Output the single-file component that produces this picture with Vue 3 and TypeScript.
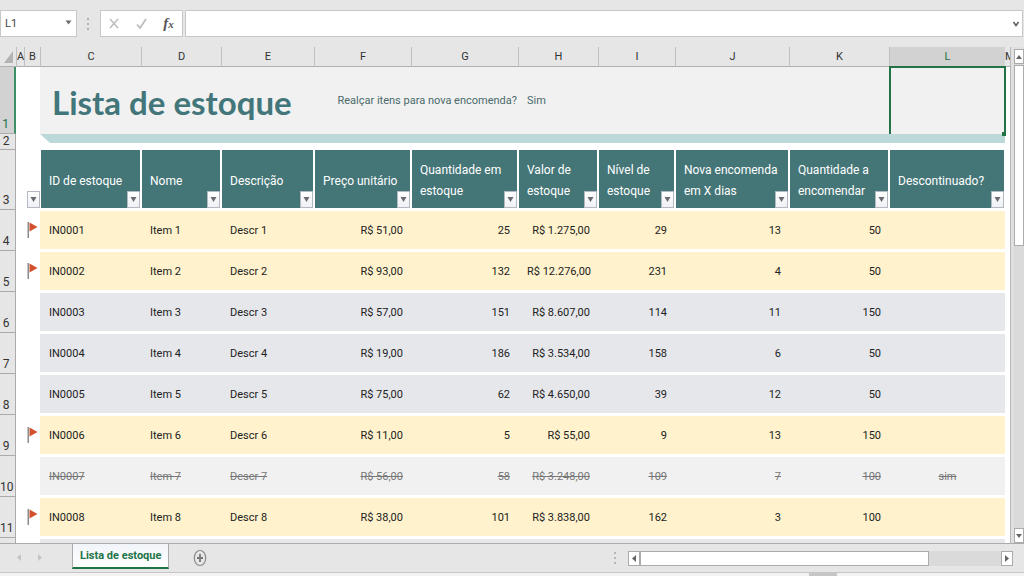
<script setup lang="ts">
import { ref } from 'vue'

interface Column {
  letter: string
  width: number
  label?: string
  align?: 'left' | 'right' | 'center'
}

interface StockRow {
  number: number
  flagged: boolean
  discontinued: boolean
  values: string[]
}

const columns: Column[] = [
  { letter: 'A', width: 8 },
  { letter: 'B', width: 16 },
  { letter: 'C', width: 101, label: 'ID de estoque', align: 'left' },
  { letter: 'D', width: 80, label: 'Nome', align: 'left' },
  { letter: 'E', width: 93, label: 'Descrição', align: 'left' },
  { letter: 'F', width: 97, label: 'Preço unitário', align: 'right' },
  { letter: 'G', width: 107, label: 'Quantidade em estoque', align: 'right' },
  { letter: 'H', width: 80, label: 'Valor de estoque', align: 'right' },
  { letter: 'I', width: 77, label: 'Nível de estoque', align: 'right' },
  { letter: 'J', width: 114, label: 'Nova encomenda em X dias', align: 'right' },
  { letter: 'K', width: 100, label: 'Quantidade a encomendar', align: 'right' },
  { letter: 'L', width: 116, label: 'Descontinuado?', align: 'center' },
  { letter: 'M', width: 5 },
]
const dataColumns = columns.filter((c) => c.label)

const item = (n: number, flagged: boolean, rest: string[], discontinued = false): StockRow => ({
  number: n + 3,
  flagged,
  discontinued,
  values: [`IN000${n}`, `Item ${n}`, `Descr ${n}`, ...rest],
})

const rows: StockRow[] = [
  item(1, true, ['R$ 51,00', '25', 'R$ 1.275,00', '29', '13', '50', '']),
  item(2, true, ['R$ 93,00', '132', 'R$ 12.276,00', '231', '4', '50', '']),
  item(3, false, ['R$ 57,00', '151', 'R$ 8.607,00', '114', '11', '150', '']),
  item(4, false, ['R$ 19,00', '186', 'R$ 3.534,00', '158', '6', '50', '']),
  item(5, false, ['R$ 75,00', '62', 'R$ 4.650,00', '39', '12', '50', '']),
  item(6, true, ['R$ 11,00', '5', 'R$ 55,00', '9', '13', '150', '']),
  item(7, false, ['R$ 56,00', '58', 'R$ 3.248,00', '109', '7', '100', 'sim'], true),
  item(8, true, ['R$ 38,00', '101', 'R$ 3.838,00', '162', '3', '100', '']),
]

const cellName = ref('L1')
const formula = ref('')
</script>

<template>
  <div class="app">
    <header class="formula-bar">
      <div class="name-box">
        <input v-model="cellName" class="name-input" aria-label="Caixa de nome" />
        <button class="plain" aria-label="Abrir lista de nomes">
          <svg width="7" height="5" viewBox="0 0 7 5"><path d="M0.5 0.5h6L3.5 4.5z" fill="#6e6e6e" /></svg>
        </button>
      </div>
      <svg class="grip" width="2" height="12" viewBox="0 0 2 12">
        <path d="M0 0h2v2H0zM0 5h2v2H0zM0 10h2v2H0z" fill="#b0b0b0" />
      </svg>
      <div class="entry-buttons">
        <button class="plain" aria-label="Cancelar">
          <svg width="10" height="11" viewBox="0 0 10 11"><path d="M1 1l8 9M9 1L1 10" stroke="#bdbdbd" stroke-width="1.5" /></svg>
        </button>
        <button class="plain" aria-label="Inserir">
          <svg width="11" height="11" viewBox="0 0 11 11"><path d="M1 6.5L4 10L10 1" fill="none" stroke="#bdbdbd" stroke-width="1.8" /></svg>
        </button>
        <button class="plain fx" aria-label="Inserir função">f<sub>x</sub></button>
      </div>
      <div class="formula">
        <input v-model="formula" class="formula-input" aria-label="Barra de fórmulas" />
        <button class="plain" aria-label="Expandir barra de fórmulas">
          <svg width="6" height="6" viewBox="0 0 6 6"><path d="M0.5 1L3 4.5L5.5 1" fill="none" stroke="#666" stroke-width="1.6" /></svg>
        </button>
      </div>
    </header>

    <main class="workspace">
      <div class="sheet">
        <table>
          <colgroup>
            <col class="col-number" />
            <col v-for="c in columns" :key="c.letter" :style="{ width: c.width + 'px' }" />
          </colgroup>
          <thead>
            <tr class="letters">
              <th class="corner">
                <svg width="9" height="12" viewBox="0 0 9 12"><path d="M9 0v12H0z" fill="#b3b3b3" /></svg>
              </th>
              <th
                v-for="c in columns"
                :key="c.letter"
                scope="col"
                :class="{ active: c.letter === 'L', partial: c.letter === 'M' }"
              >
                {{ c.letter }}
              </th>
            </tr>
          </thead>
          <tbody>
            <tr class="title-row">
              <th class="number active" scope="row">1</th>
              <td colspan="2"></td>
              <td colspan="3" class="shade"><h1>Lista de estoque</h1></td>
              <td colspan="2" class="shade question">Realçar itens para nova encomenda?</td>
              <td colspan="4" class="shade answer">Sim</td>
              <td class="shade selected"><span class="selection"></span></td>
              <td></td>
            </tr>
            <tr class="band-row">
              <th class="number" scope="row">2</th>
              <td colspan="2"></td>
              <td colspan="10"><div class="band"></div></td>
              <td></td>
            </tr>
            <tr class="labels">
              <th class="number" scope="row">3</th>
              <td></td>
              <td class="flag-head">
                <button class="filter" aria-label="Filtrar sinalizador">
                  <svg width="7" height="5" viewBox="0 0 7 5"><path d="M0.5 0h6L3.5 5z" fill="#6a6a70" /></svg>
                </button>
              </td>
              <th v-for="c in dataColumns" :key="c.letter" class="label" scope="col">
                {{ c.label }}
                <button class="filter" :aria-label="'Filtrar ' + c.label">
                  <svg width="7" height="5" viewBox="0 0 7 5"><path d="M0.5 0h6L3.5 5z" fill="#6a6a70" /></svg>
                </button>
              </th>
              <td></td>
            </tr>
            <tr
              v-for="r in rows"
              :key="r.number"
              class="item"
              :class="{ flagged: r.flagged, discontinued: r.discontinued }"
            >
              <th class="number" scope="row">{{ r.number }}</th>
              <td></td>
              <td class="flag">
                <svg v-if="r.flagged" width="11" height="16" viewBox="0 0 11 16">
                  <path d="M0.5 0h1.5v16H0.5z" fill="#8b8b8b" />
                  <path d="M2.5 0.5L10.5 5L2.5 9.5z" fill="#d3502c" />
                </svg>
              </td>
              <td v-for="(v, i) in r.values" :key="i" class="value" :class="dataColumns[i].align">{{ v }}</td>
              <td></td>
            </tr>
            <tr class="item">
              <th class="number" scope="row"></th>
              <td></td>
              <td></td>
              <td v-for="c in dataColumns" :key="c.letter" class="value"></td>
              <td></td>
            </tr>
          </tbody>
        </table>
      </div>
      <div class="vscroll">
        <button class="arrow" aria-label="Rolar para cima">
          <svg width="6" height="4" viewBox="0 0 6 4"><path d="M3 0l3 4H0z" fill="#666" /></svg>
        </button>
        <div class="vtrack"><div class="vthumb"></div></div>
        <button class="arrow" aria-label="Rolar para baixo">
          <svg width="6" height="4" viewBox="0 0 6 4"><path d="M3 4l3-4H0z" fill="#666" /></svg>
        </button>
      </div>
    </main>

    <footer class="tabs">
      <nav class="tab-nav">
        <button class="plain" aria-label="Planilha anterior">
          <svg width="4" height="7" viewBox="0 0 4 7"><path d="M4 0v7L0 3.5z" fill="#c3c3c3" /></svg>
        </button>
        <button class="plain" aria-label="Próxima planilha">
          <svg width="4" height="7" viewBox="0 0 4 7"><path d="M0 0v7l4-3.5z" fill="#c3c3c3" /></svg>
        </button>
      </nav>
      <button class="tab">Lista de estoque</button>
      <button class="plain add" aria-label="Nova planilha">
        <svg width="14" height="18" viewBox="0 0 14 18">
          <ellipse cx="7" cy="9" rx="5.7" ry="7.5" fill="none" stroke="#8a8a8a" stroke-width="1.2" />
          <path d="M7 5v8M4 9h6" stroke="#777" stroke-width="1.8" />
        </svg>
      </button>
      <div class="hscroll">
        <svg class="grip" width="2" height="12" viewBox="0 0 2 12">
          <path d="M0 0h2v2H0zM0 5h2v2H0zM0 10h2v2H0z" fill="#b5b5b5" />
        </svg>
        <button class="arrow" aria-label="Rolar para a esquerda">
          <svg width="4" height="7" viewBox="0 0 4 7"><path d="M4 0v7L0 3.5z" fill="#666" /></svg>
        </button>
        <div class="htrack"><div class="hthumb"></div></div>
        <button class="arrow" aria-label="Rolar para a direita">
          <svg width="4" height="7" viewBox="0 0 4 7"><path d="M0 0v7l4-3.5z" fill="#666" /></svg>
        </button>
      </div>
    </footer>
    <div class="status"><span class="status-mark"></span></div>
  </div>
</template>

<style>
body {
  margin: 0;
}
</style>

<style scoped>
.app {
  display: flex;
  flex-direction: column;
  height: 100vh;
  overflow: hidden;
  background: #e6e6e6;
  color: #222;
  font-family: Roboto, 'Liberation Sans', sans-serif;
  font-size: 11px;
}
.app * {
  box-sizing: border-box;
}
svg {
  display: block;
  flex: none;
}
button,
input {
  margin: 0;
  padding: 0;
  border: 0;
  border-radius: 0;
  background: none;
  font: inherit;
  color: inherit;
}
.plain {
  display: flex;
  align-items: center;
  justify-content: center;
}

/* formula bar */
.formula-bar {
  display: flex;
  align-items: center;
  height: 47px;
  flex: none;
}
.name-box,
.entry-buttons,
.formula {
  display: flex;
  align-items: center;
  height: 27px;
  border: 1px solid #c8c8c8;
  background: #fff;
}
.name-box {
  width: 77px;
  padding: 0 4px;
}
.name-input {
  flex: 1;
  min-width: 0;
  color: #444;
}
.name-box .plain {
  margin-bottom: 2px;
}
.formula-bar .grip {
  margin: 0 11px 0 10px;
}
.entry-buttons {
  width: 83px;
  justify-content: space-around;
}
.fx {
  font: italic bold 15px 'Liberation Serif', serif;
  color: #555;
}
.fx sub {
  font-size: 11px;
  line-height: 8px;
}
.formula {
  flex: 1;
  margin: 0 1px 0 2px;
  padding-right: 3px;
}
.formula-input {
  flex: 1;
  min-width: 0;
}

/* sheet */
.workspace {
  display: flex;
  flex: 1;
  min-height: 0;
}
.sheet {
  flex: 1;
  min-width: 0;
  overflow: hidden;
  background: #fff;
}
table {
  width: 100%;
  table-layout: fixed;
  border-collapse: separate;
  border-spacing: 0;
}
th,
td {
  padding: 0;
  font-weight: normal;
}
.col-number {
  width: 16px;
}
.letters th {
  height: 20px;
  background: #e6e6e6;
  border-left: 1px solid #c0c0c0;
  border-bottom: 1px solid #b0b0b0;
  color: #333;
  line-height: 19px;
}
.letters .corner {
  border-left: 0;
  padding-left: 4px;
}
.letters .partial {
  overflow: hidden;
  border-left: 0;
  text-align: left;
}
.letters .active,
.number.active {
  background: #d2d2d2;
  color: #217346;
}
.number {
  padding-right: 3px;
  background: #e6e6e6;
  border-right: 1px solid #ababab;
  border-bottom: 1px solid #ababab;
  vertical-align: bottom;
  text-align: center;
  color: #333;
  font-size: 12px;
  line-height: 17px;
}
.number.active {
  border-right: 2px solid #3f9068;
}
.title-row {
  height: 67px;
}
.shade {
  background: #f1f1f1;
  color: #4a6a6c;
}
h1 {
  margin: 0;
  padding: 3px 0 0 12px;
  font-family: Lato, sans-serif;
  font-size: 33px;
  line-height: 48px;
  white-space: nowrap;
  color: #43767a;
}
.question {
  padding-right: 1px;
  text-align: right;
  white-space: nowrap;
}
.answer {
  padding-left: 9px;
}
.selected {
  position: relative;
  z-index: 1;
}
.selection {
  position: absolute;
  inset: -1px -1px 0 0;
  border: 2px solid #217346;
  border-bottom: 0;
}
.selection::after {
  content: '';
  position: absolute;
  right: -2px;
  bottom: -2px;
  width: 4px;
  height: 4px;
  background: #217346;
}
.band-row {
  height: 16px;
}
.band-row td {
  vertical-align: top;
}
.band {
  height: 9px;
  background: #bcd8d9;
  clip-path: polygon(0 0, 100% 0, 100% 100%, 10px 100%);
}
.band-row .number {
  line-height: 15px;
}
.labels {
  height: 60px;
}
.label,
.flag-head {
  position: relative;
}
.label {
  padding: 4px 7px 0 8px;
  border: solid #fff;
  border-width: 0 1px 2px;
  background: #447678;
  background-clip: padding-box;
  color: #fff;
  text-align: left;
  font-size: 12px;
  line-height: 21px;
}
.filter {
  position: absolute;
  right: 0;
  bottom: 0;
  display: flex;
  align-items: center;
  justify-content: center;
  width: 13px;
  height: 17px;
  border: 1px solid #b4b8c0;
  background: linear-gradient(#fff, #eef0f4);
}
.flag-head .filter {
  bottom: 2px;
}
.item {
  height: 41px;
}
.value {
  border: solid #fff;
  border-width: 1px 0 2px;
  padding: 0 8px 0 9px;
  background: #e6e7eb;
  white-space: nowrap;
}
.flagged .value {
  background: #fff2cc;
}
.discontinued .value {
  background: #f1f1f1;
  color: #777;
  text-decoration: line-through;
}
.right {
  text-align: right;
}
.center {
  text-align: center;
}
.flag {
  padding: 0 0 2px 3px;
}

/* scroll bars */
.vscroll {
  display: flex;
  flex-direction: column;
  width: 14px;
  flex: none;
  padding: 2px 0 0 3px;
  background: #e0e0e0;
  border-left: 1px solid #b8b8b8;
}
.arrow {
  display: flex;
  align-items: center;
  justify-content: center;
  flex: none;
  background: #fff;
  border: 1px solid #ababab;
}
.vscroll .arrow {
  height: 15px;
}
.vtrack {
  flex: 1;
  padding-top: 1px;
  background: #dadada;
}
.vthumb {
  height: 39%;
  background: #fff;
  border: 1px solid #ababab;
}
.tabs {
  display: flex;
  align-items: flex-start;
  height: 29px;
  flex: none;
  border-top: 1px solid #ababab;
}
.tab-nav {
  display: flex;
  align-items: center;
  gap: 17px;
  width: 72px;
  height: 26px;
  padding-left: 17px;
}
.tab {
  height: 25px;
  padding: 0 7px;
  border: solid #ababab;
  border-width: 0 1px;
  border-bottom: 2px solid #217346;
  background: linear-gradient(#f1f4f9, #fff);
  font-weight: bold;
  color: #217346;
}
.add {
  height: 27px;
  margin-left: 24px;
}
.hscroll {
  display: flex;
  align-items: center;
  width: 39%;
  height: 28px;
  margin: 0 11px 0 auto;
}
.hscroll .grip {
  margin-right: 12px;
}
.hscroll .arrow {
  width: 12px;
  height: 15px;
}
.htrack {
  flex: 1;
  height: 15px;
  background: #dadada;
}
.hthumb {
  width: 80%;
  height: 100%;
  background: #fff;
  border: 1px solid #ababab;
}
.status {
  height: 4px;
  flex: none;
  border-top: 1px solid #c6c6c6;
  background: #f3f3f3;
}
.status-mark {
  display: block;
  width: 28px;
  height: 3px;
  margin-left: 79%;
  background: #c6c6c6;
}
</style>
